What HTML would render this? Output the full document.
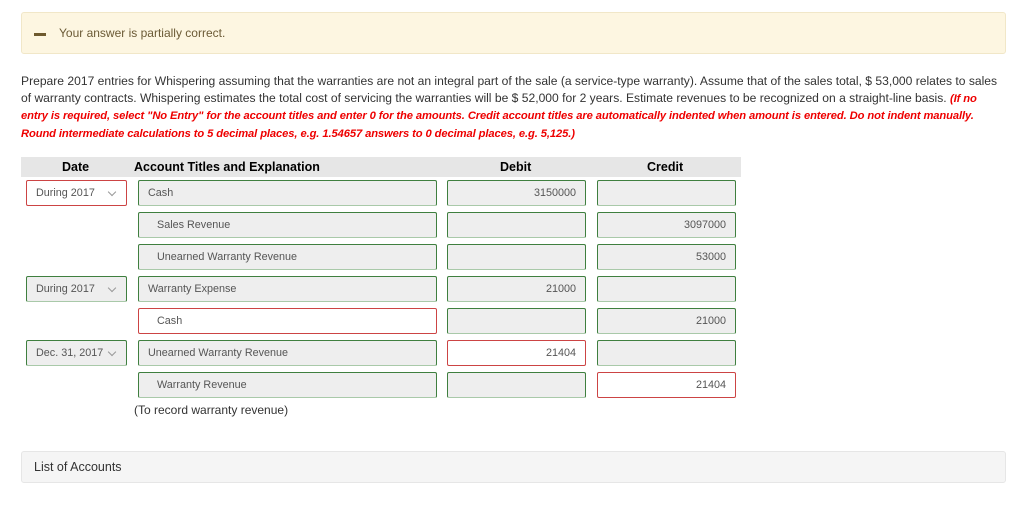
<!DOCTYPE html>
<html><head><style>
body{margin:0;width:1024px;height:506px;background:#fff;font-family:"Liberation Sans",sans-serif;position:relative;overflow:hidden;color:#333}
.a{position:absolute;box-sizing:border-box}
.alert{left:21px;top:12px;width:985px;height:42px;background:#fdf6e1;border:1px solid #f1e7c8;border-radius:3px}
.p{left:21px;top:73px;width:1000px;font-size:12.1px;line-height:16.7px;color:#333;white-space:nowrap}
.p b{color:#e00;font-style:italic;font-size:11.2px;letter-spacing:-0.1px}
.hd{left:21px;top:157px;width:720px;height:20px;background:#e6e6e6;font-weight:bold;font-size:12.5px;color:#000}
.hd span{position:absolute;top:3px}
.f{height:26px;border:1px solid #3f7f3f;background:#eee;font-size:10.8px;color:#555;line-height:24px;padding:0 9px;white-space:nowrap;border-radius:2px;border-bottom-color:#a9c9a9}
.f.r{border-color:#c44;background:#fff;border-bottom-color:#c44}
.n{text-align:right}
.d{width:101px;left:26px}
.t{width:299px;left:138px}
.t.i{padding-left:18px}
.db{width:139px;left:447px}
.cr{width:139px;left:597px}
.chev{position:absolute;right:11px;top:8px;width:5px;height:5px;border-right:1px solid #999;border-bottom:1px solid #999;transform:rotate(45deg)}
</style></head><body>
<div class="a alert"><div class="a" style="left:12px;top:20px;width:12px;height:3px;background:#6e5a2e"></div><div class="a" style="left:37px;top:13px;font-size:12px;color:#6b5a35">Your answer is partially correct.</div></div>
<div class="a p">Prepare 2017 entries for Whispering assuming that the warranties are not an integral part of the sale (a service-type warranty). Assume that of the sales total, $ 53,000 relates to sales<br>of warranty contracts. Whispering estimates the total cost of servicing the warranties will be $ 52,000 for 2 years. Estimate revenues to be recognized on a straight-line basis. <b>(If no<br>entry is required, select "No Entry" for the account titles and enter 0 for the amounts. Credit account titles are automatically indented when amount is entered. Do not indent manually.<br>Round intermediate calculations to 5 decimal places, e.g. 1.54657 answers to 0 decimal places, e.g. 5,125.)</b></div>
<div class="a hd"><span style="left:41px">Date</span><span style="left:113px">Account Titles and Explanation</span><span style="left:479px">Debit</span><span style="left:626px">Credit</span></div>

<div class="a f d r" style="top:180px">During 2017<i class="chev"></i></div>
<div class="a f t" style="top:180px">Cash</div>
<div class="a f db n" style="top:180px">3150000</div>
<div class="a f cr" style="top:180px"></div>

<div class="a f t i" style="top:212px">Sales Revenue</div>
<div class="a f db" style="top:212px"></div>
<div class="a f cr n" style="top:212px">3097000</div>

<div class="a f t i" style="top:244px">Unearned Warranty Revenue</div>
<div class="a f db" style="top:244px"></div>
<div class="a f cr n" style="top:244px">53000</div>

<div class="a f d" style="top:276px">During 2017<i class="chev"></i></div>
<div class="a f t" style="top:276px">Warranty Expense</div>
<div class="a f db n" style="top:276px">21000</div>
<div class="a f cr" style="top:276px"></div>

<div class="a f t i r" style="top:308px">Cash</div>
<div class="a f db" style="top:308px"></div>
<div class="a f cr n" style="top:308px">21000</div>

<div class="a f d" style="top:340px">Dec. 31, 2017<i class="chev"></i></div>
<div class="a f t" style="top:340px">Unearned Warranty Revenue</div>
<div class="a f db n r" style="top:340px">21404</div>
<div class="a f cr" style="top:340px"></div>

<div class="a f t i" style="top:372px">Warranty Revenue</div>
<div class="a f db" style="top:372px"></div>
<div class="a f cr n r" style="top:372px">21404</div>

<div class="a" style="left:134px;top:403px;font-size:12px;color:#333">(To record warranty revenue)</div>
<div class="a" style="left:21px;top:451px;width:985px;height:32px;background:#f5f5f5;border:1px solid #e6e6e6;border-radius:3px;font-size:12.5px;line-height:30px;padding-left:12px;color:#333">List of Accounts</div>
</body></html>
